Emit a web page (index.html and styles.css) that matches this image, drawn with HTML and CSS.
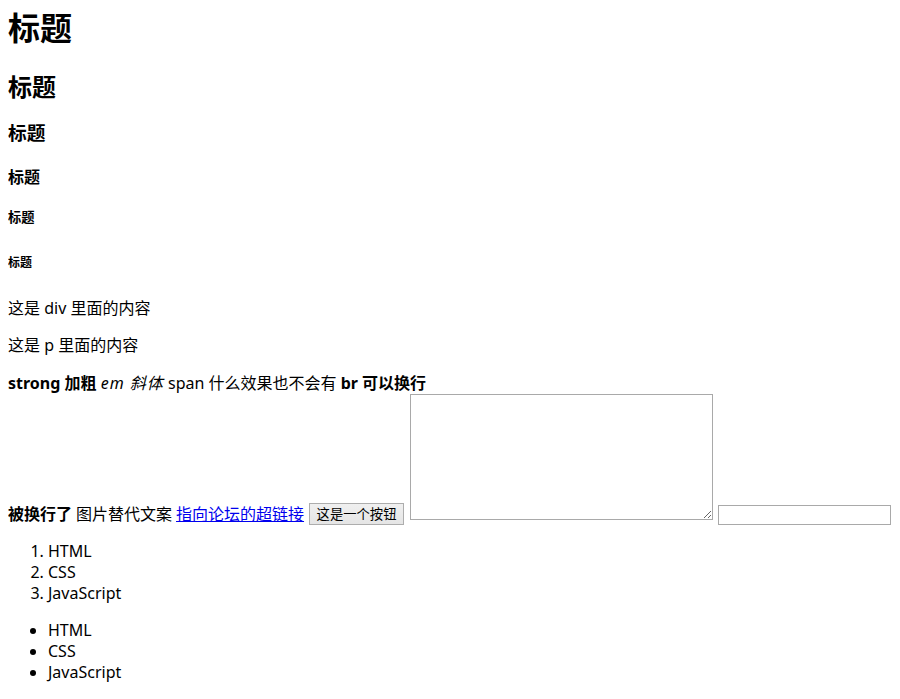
FILE: index.html
```html
<!DOCTYPE html>
<html lang="zh-CN">
<head>
<meta charset="utf-8">
<title>标题</title>
<link rel="stylesheet" href="styles.css">
</head>
<body>
<h1>标题</h1>
<h2>标题</h2>
<h3>标题</h3>
<h4>标题</h4>
<h5>标题</h5>
<h6>标题</h6>
<div class="block">这是 div 里面的内容</div>
<p>这是 p 里面的内容</p>
<div class="mixed">
  <div class="line1"><strong>strong 加粗</strong> <em class="slant">em 斜体</em> <span>span 什么效果也不会有</span> <strong>br 可以换行</strong></div>
  <div class="line2">
    <strong class="txt">被换行了</strong>
    <span class="txt alt">图片替代文案</span>
    <a class="txt link" href="#">指向论坛的超链接</a>
    <button class="btn" type="button">这是一个按钮</button>
    <textarea class="area"></textarea>
    <input class="field" type="text">
  </div>
</div>
<ol class="list">
  <li>HTML</li>
  <li>CSS</li>
  <li>JavaScript</li>
</ol>
<ul class="list">
  <li>HTML</li>
  <li>CSS</li>
  <li>JavaScript</li>
</ul>
</body>
</html>
```
FILE: styles.css
```css
html, body {
  background: #ffffff;
}
body {
  margin: 0 8px;
  font-family: "Noto Sans", "Noto Sans CJK SC", sans-serif;
  font-size: 16px;
  line-height: 1.32;
  color: #000000;
}
h1 { font-size: 32px; margin: 7px 0 21.44px; }
h2 { font-size: 24px; margin: 19.92px 0 18.4px; }
h3 { font-size: 18.72px; margin: 18.4px 0 18.72px; }
h4 { font-size: 16px; margin: 21.28px 0 21.2px; }
h5 { font-size: 13.28px; margin: 21.2px 0 22.18px; }
h6 { font-size: 12px; margin: 28px 0; }
h1, h2, h3, h4, h5, h6 { font-weight: bold; }

.block { margin: 0; }
p { margin: 16px 0; }

.mixed { margin: 16px 0; }
.line1 { height: 21px; }
.slant {
  font-style: italic;
  letter-spacing: 1px;
}
.line2 {
  display: flex;
  align-items: flex-end;
}
.txt {
  display: block;
  height: 21px;
  line-height: 21px;
}
.alt { margin-left: 4px; }
.link { margin-left: 4px; color: #0000ee; }
.btn {
  margin-left: 5px;
  box-sizing: border-box;
  width: 95px;
  height: 22px;
  padding: 0 6px;
  font-family: "Noto Sans CJK SC", sans-serif;
  font-size: 13.33px;
  line-height: 18px;
  color: #000;
  border: 1px solid #adadad;
  border-radius: 0;
  background: linear-gradient(#f0f0f0, #e5e5e5);
  margin-bottom: 0;
}
.area {
  margin: 0 0 5px 6px;
  box-sizing: border-box;
  width: 303px;
  height: 126px;
  padding: 2px;
  border: 1px solid #a9a9a9;
  font-family: "Liberation Mono", monospace;
  font-size: 13.33px;
}
.field {
  margin: 0 0 0 5px;
  box-sizing: border-box;
  width: 173px;
  height: 20px;
  padding: 1px 2px;
  border: 1px solid #a9a9a9;
  font-size: 13.33px;
}
.list {
  margin: 16px 0;
  padding-left: 40px;
}
.list li { height: 21px; }
```
